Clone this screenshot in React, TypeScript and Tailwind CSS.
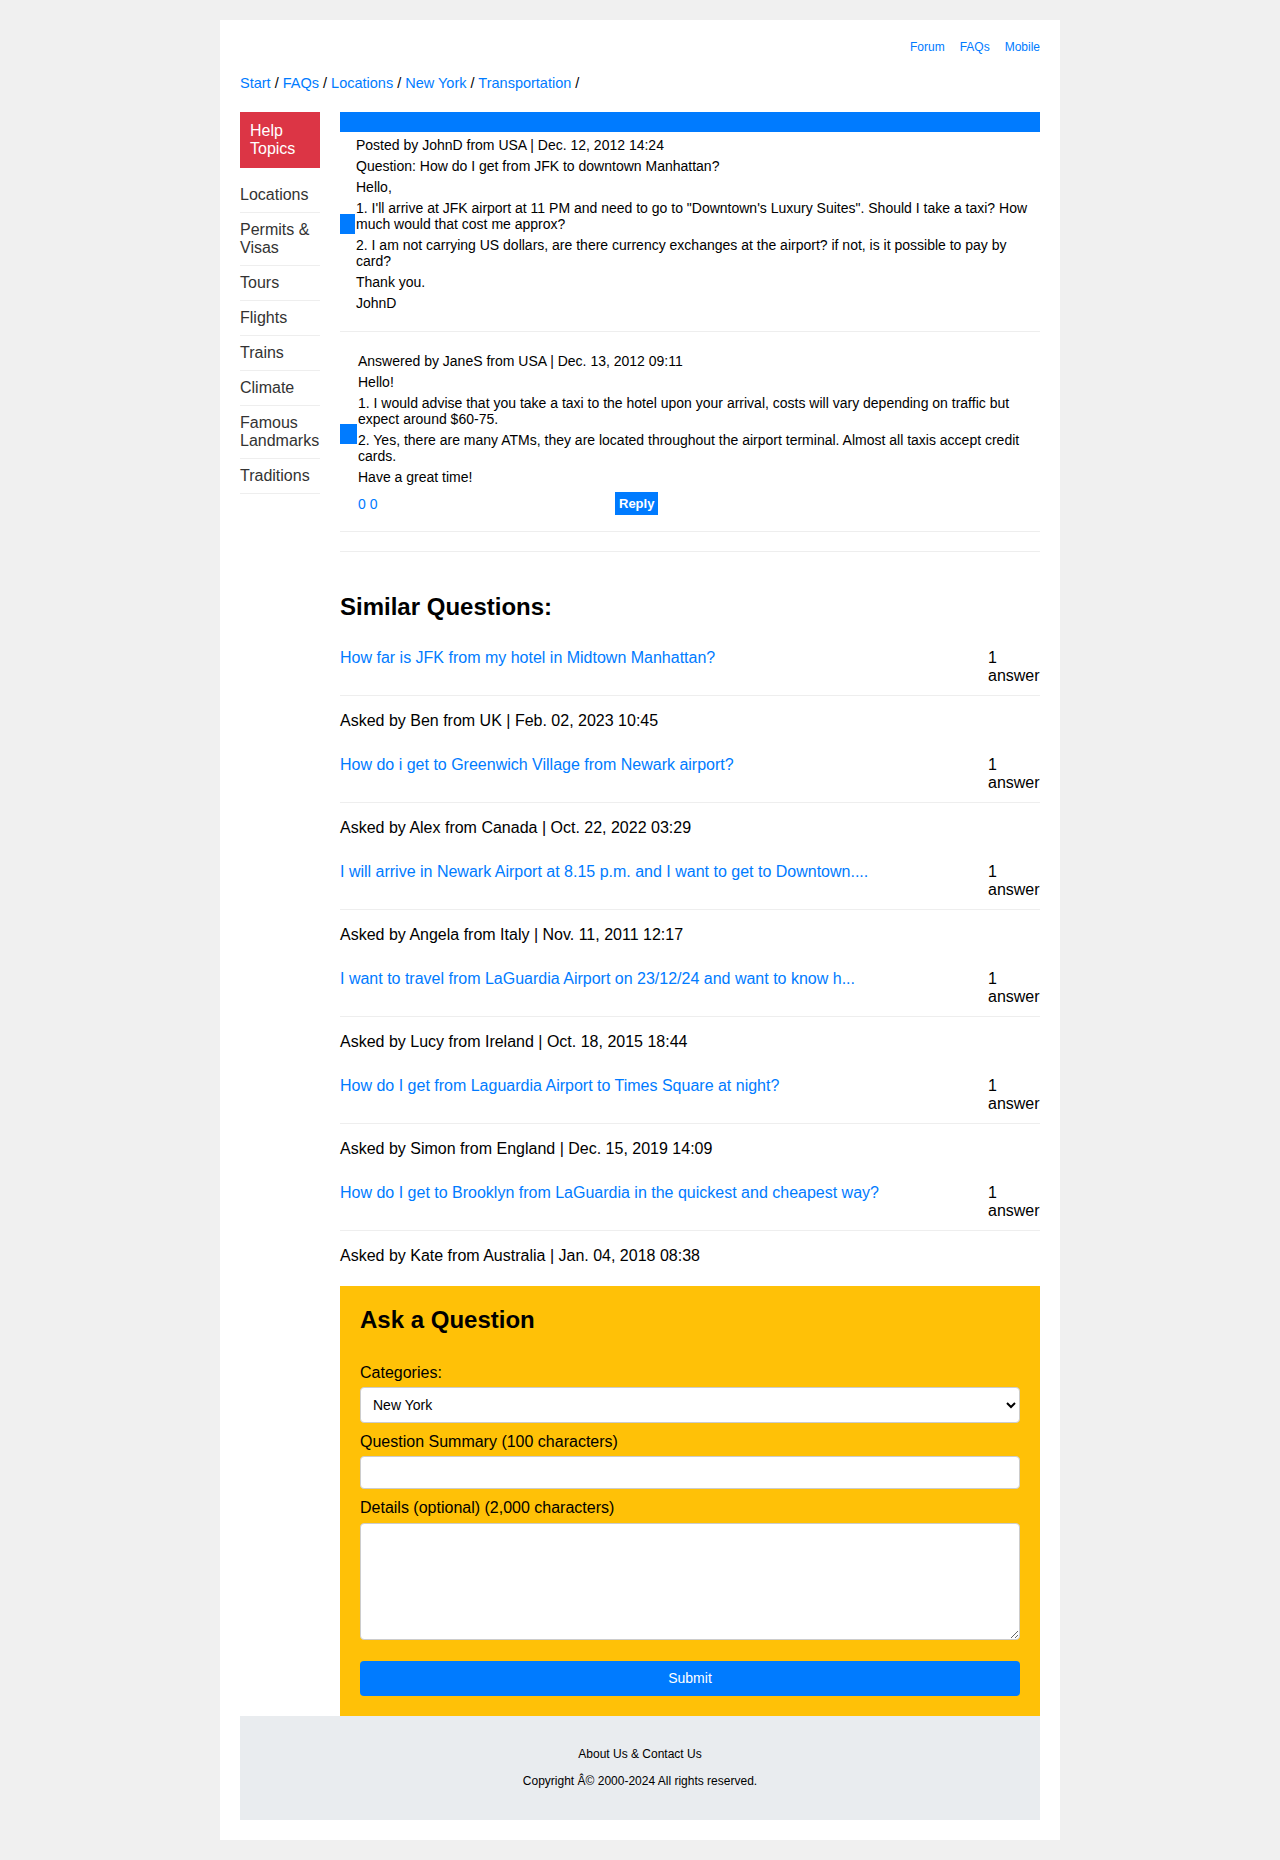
const SIDEBAR_ITEMS = [
  "Locations",
  "Permits & Visas",
  "Tours",
  "Flights",
  "Trains",
  "Climate",
  "Famous Landmarks",
  "Traditions",
];

const CRUMBS = ["Start", "FAQs", "Locations", "New York", "Transportation"];

const SIMILAR = [
  {
    q: "How far is JFK from my hotel in Midtown Manhattan?",
    by: "Asked by Ben from UK | Feb. 02, 2023 10:45",
  },
  {
    q: "How do i get to Greenwich Village from Newark airport?",
    by: "Asked by Alex from Canada | Oct. 22, 2022 03:29",
  },
  {
    q: "I will arrive in Newark Airport at 8.15 p.m. and I want to get to Downtown....",
    by: "Asked by Angela from Italy | Nov. 11, 2011 12:17",
  },
  {
    q: "I want to travel from LaGuardia Airport on 23/12/24 and want to know h...",
    by: "Asked by Lucy from Ireland | Oct. 18, 2015 18:44",
  },
  {
    q: "How do I get from Laguardia Airport to Times Square at night?",
    by: "Asked by Simon from England | Dec. 15, 2019 14:09",
  },
  {
    q: "How do I get to Brooklyn from LaGuardia in the quickest and cheapest way?",
    by: "Asked by Kate from Australia | Jan. 04, 2018 08:38",
  },
];

export default function App() {
  return (
    <div className="min-h-screen bg-[#f0f0f0] py-5 font-['Liberation_Sans',Arial,sans-serif] text-black">
      <div className="mx-auto w-[840px] bg-white p-5">
        {/* top links */}
        <nav className="flex justify-end gap-[15px] text-[12px] leading-[14px] text-[#007bff]">
          <a href="#">Forum</a>
          <a href="#">FAQs</a>
          <a href="#">Mobile</a>
        </nav>

        {/* breadcrumb */}
        <div className="mt-[21px] text-[14.5px] leading-[16px]">
          {CRUMBS.map((c) => (
            <span key={c}>
              <a href="#" className="text-[#007bff]">
                {c}
              </a>{" "}
              /{" "}
            </span>
          ))}
        </div>

        <div className="mt-[21px] flex gap-5">
          {/* sidebar */}
          <aside className="w-[80px] shrink-0">
            <div className="bg-[#dc3545] p-[10px] text-[16px] leading-[18px] text-white">
              Help Topics
            </div>
            <ul className="mt-[10px]">
              {SIDEBAR_ITEMS.map((item) => (
                <li
                  key={item}
                  className="border-b border-[#eee] py-2 text-[16px] leading-[18px] text-[#333]"
                >
                  {item}
                </li>
              ))}
            </ul>
          </aside>

          {/* main */}
          <main className="min-w-0 flex-1">
            <div className="h-5 bg-[#007bff]" />

            {/* question */}
            <div className="flex items-center border-b border-[#eee] pt-[5px] pb-5">
              <div className="h-5 w-[15px] shrink-0 bg-[#007bff]" />
              <div className="ml-px space-y-[5px] text-[14px] leading-[16px]">
                <p>Posted by JohnD from USA | Dec. 12, 2012 14:24</p>
                <p>Question: How do I get from JFK to downtown Manhattan?</p>
                <p>Hello,</p>
                <p>
                  1. I'll arrive at JFK airport at 11 PM and need to go to
                  "Downtown's Luxury Suites". Should I take a taxi? How much
                  would that cost me approx?
                </p>
                <p>
                  2. I am not carrying US dollars, are there currency exchanges
                  at the airport? if not, is it possible to pay by card?
                </p>
                <p>Thank you.</p>
                <p>JohnD</p>
              </div>
            </div>

            {/* answer */}
            <div className="flex items-center border-b border-[#eee] pt-[21px] pb-[16px]">
              <div className="h-5 w-[17px] shrink-0 bg-[#007bff]" />
              <div className="ml-px space-y-[5px] text-[14px] leading-[16px]">
                <p>Answered by JaneS from USA | Dec. 13, 2012 09:11</p>
                <p>Hello!</p>
                <p>
                  1. I would advise that you take a taxi to the hotel upon your
                  arrival, costs will vary depending on traffic but expect
                  around $60-75.
                </p>
                <p>
                  2. Yes, there are many ATMs, they are located throughout the
                  airport terminal. Almost all taxis accept credit cards.
                </p>
                <p>Have a great time!</p>
                <div className="flex items-center pt-[2px]">
                  <span className="w-[257px] text-[#007bff]">
                    <a href="#">0</a> <a href="#">0</a>
                  </span>
                  <button className="bg-[#007bff] px-1 py-[3px] text-[13px] font-bold leading-[17px] text-white">
                    Reply
                  </button>
                </div>
              </div>
            </div>

            <div className="h-5 border-b border-[#eee]" />

            <h2 className="mt-[41px] text-[24px] font-bold leading-[28px]">
              Similar Questions:
            </h2>

            <div className="mt-[18px]">
              {SIMILAR.map((s) => (
                <div key={s.q}>
                  <div className="flex items-start justify-between border-b border-[#eee] py-[10px] text-[16px] leading-[18px]">
                    <a href="#" className="text-[#007bff]">
                      {s.q}
                    </a>
                    <span className="w-[52px] shrink-0">1 answer</span>
                  </div>
                  <p className="my-4 text-[16px] leading-[18px]">{s.by}</p>
                </div>
              ))}
            </div>

            {/* ask form */}
            <div className="mt-[21px] bg-[#ffc107] p-5">
              <h2 className="text-[24px] font-bold leading-[28px]">
                Ask a Question
              </h2>
              <label className="mt-[30px] block text-[16px] leading-[18px]">
                Categories:
              </label>
              <select className="mt-[5px] block h-[36px] w-full rounded border border-[#ccc] bg-white px-2 text-[14px]">
                <option>New York</option>
              </select>
              <label className="mt-[10px] block text-[16px] leading-[18px]">
                Question Summary (100 characters)
              </label>
              <input
                type="text"
                className="mt-[5px] block h-[33px] w-full rounded border border-[#ccc] bg-white px-2 text-[14px]"
              />
              <label className="mt-[10px] block text-[16px] leading-[18px]">
                Details (optional) (2,000 characters)
              </label>
              <textarea className="mt-[6px] block h-[117px] w-full rounded border border-[#ccc] bg-white px-2 text-[14px]" />
              <button className="mt-[21px] block h-[35px] w-full rounded bg-[#007bff] text-[14px] text-white">
                Submit
              </button>
            </div>
          </main>
        </div>

        <footer className="space-y-[13px] bg-[#e9ecef] pt-[31px] pb-[32px] text-center text-[12px] leading-[14px]">
          <p>About Us &amp; Contact Us</p>
          <p>Copyright Â© 2000-2024 All rights reserved.</p>
        </footer>
      </div>
    </div>
  );
}
